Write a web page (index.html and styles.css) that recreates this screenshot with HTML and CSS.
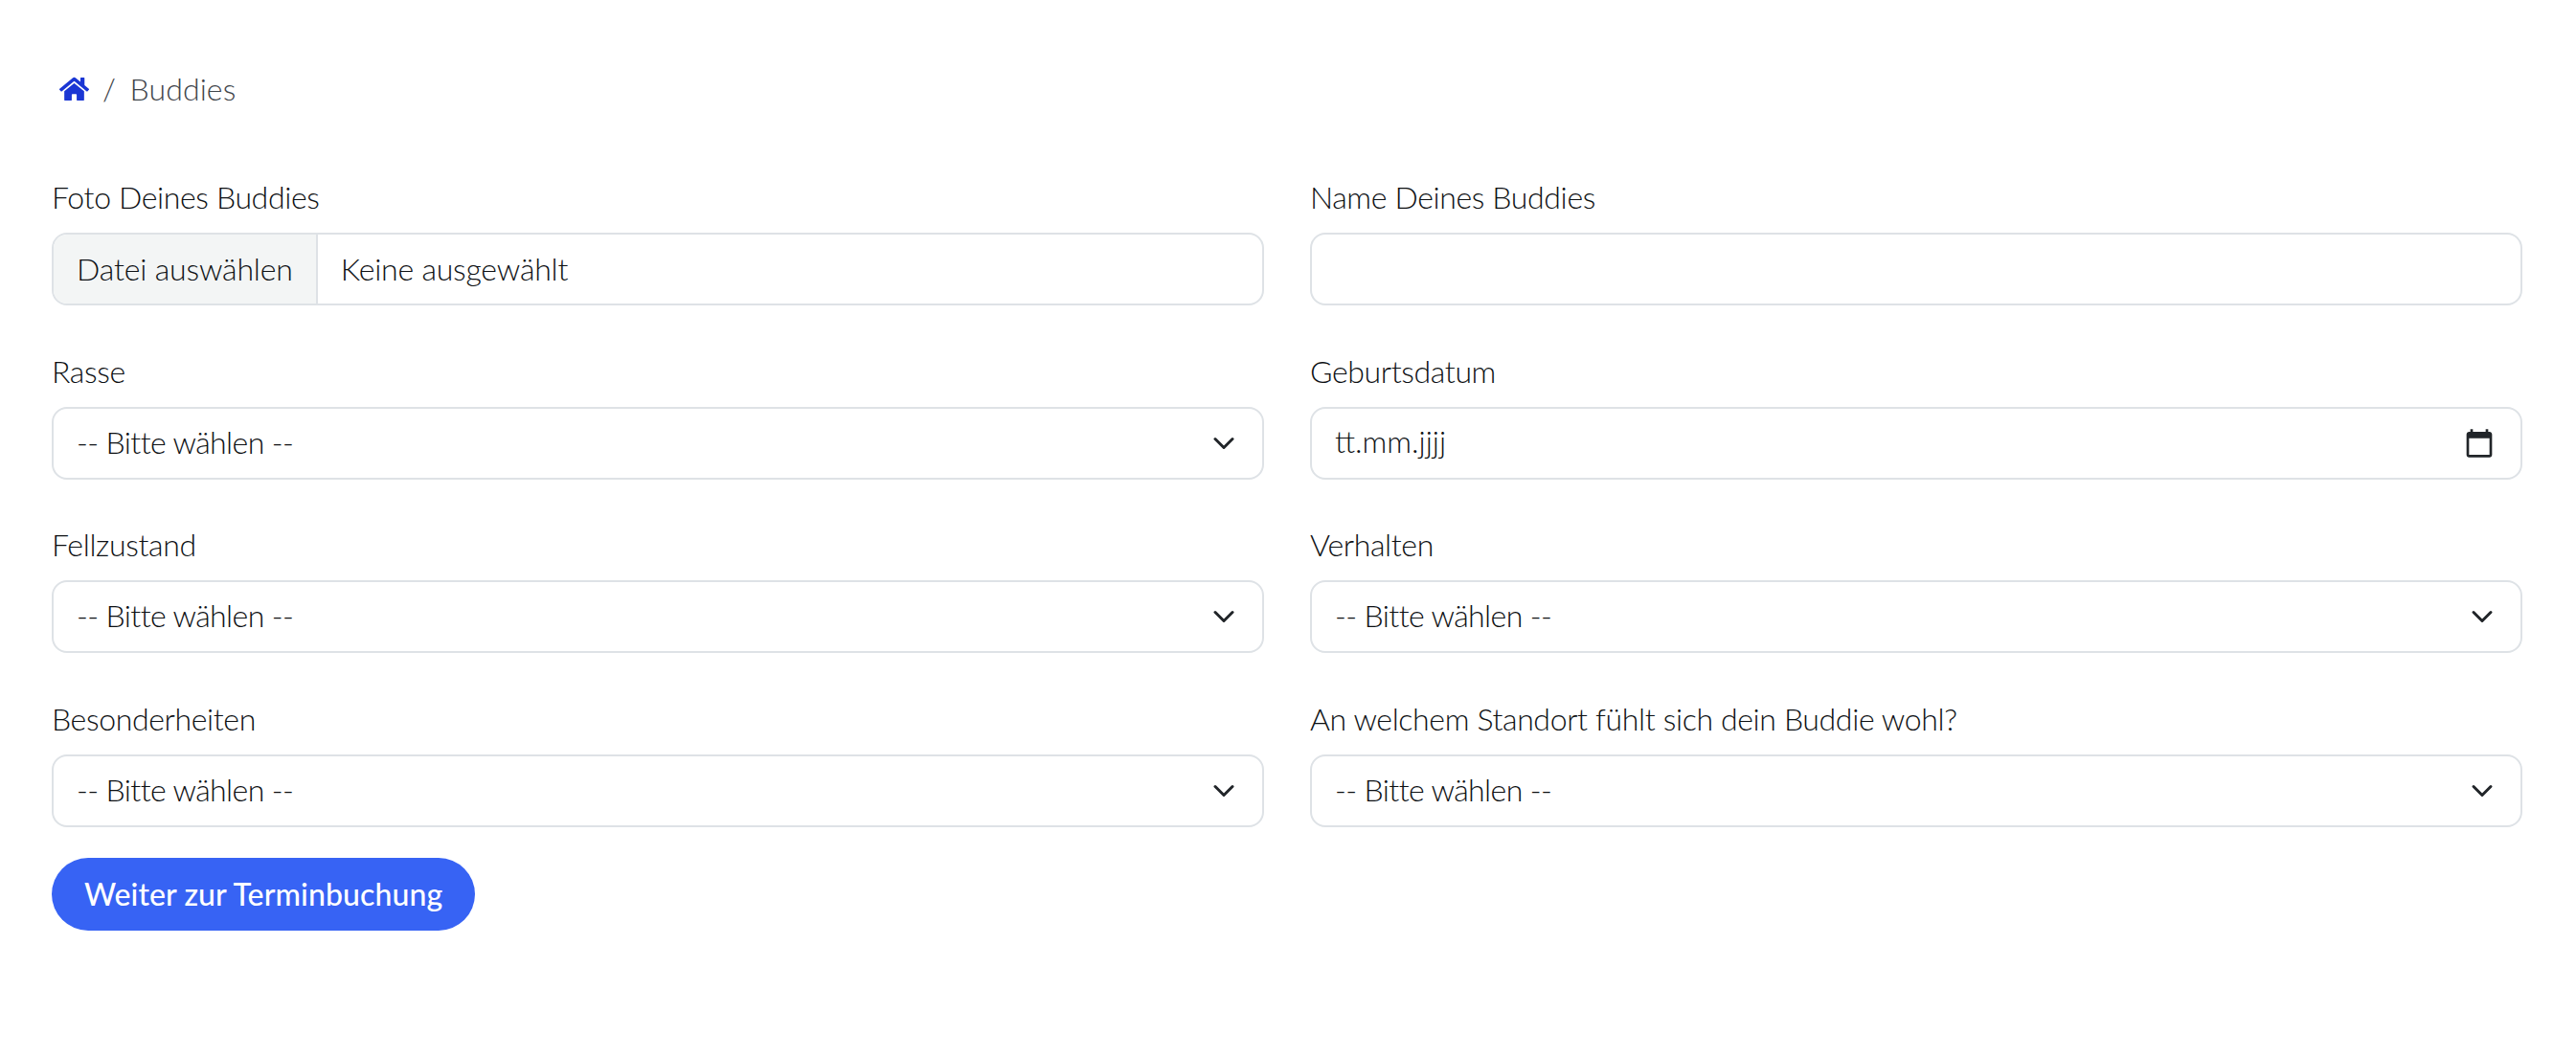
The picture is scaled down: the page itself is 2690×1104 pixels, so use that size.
FILE: index.html
```html
<!DOCTYPE html>
<html lang="de">
<head>
<meta charset="utf-8">
<title>Buddies</title>
<link rel="stylesheet" href="styles.css">
</head>
<body>
<main class="page">
  <nav class="crumbs">
    <a class="crumb-home" href="#" aria-label="Start">
      <svg class="home-icon" viewBox="0 0 576 512"><path fill="currentColor" d="M280.37 148.26L96 300.11V464a16 16 0 0 0 16 16l112.06-.29a16 16 0 0 0 15.92-16V368a16 16 0 0 1 16-16h64a16 16 0 0 1 16 16v95.64a16 16 0 0 0 16 16.05L464 480a16 16 0 0 0 16-16V300L295.67 148.26a12.19 12.19 0 0 0-15.3 0zM571.6 251.47L488 182.56V44.05a12 12 0 0 0-12-12h-56a12 12 0 0 0-12 12v72.61L318.47 43a48 48 0 0 0-61 0L4.34 251.47a12 12 0 0 0-1.6 16.9l25.5 31A12 12 0 0 0 45.15 301l235.22-193.74a12.19 12.19 0 0 1 15.3 0L530.9 301a12 12 0 0 0 16.9-1.6l25.5-31a12 12 0 0 0-1.7-16.93z"/></svg>
    </a>
    <span class="crumb-sep">/</span>
    <span class="crumb-current">Buddies</span>
  </nav>
  <form class="form">
    <div class="grid">
      <div class="field">
        <div class="label">Foto Deines Buddies</div>
        <div class="control file">
          <span class="file-btn">Datei auswählen</span>
          <span class="file-name">Keine ausgewählt</span>
        </div>
      </div>
      <div class="field">
        <label class="label" for="name">Name Deines Buddies</label>
        <input class="control input" id="name" type="text">
      </div>
      <div class="field">
        <label class="label" for="rasse">Rasse</label>
        <select class="control select" id="rasse"><option>-- Bitte wählen --</option></select>
      </div>
      <div class="field">
        <div class="label">Geburtsdatum</div>
        <div class="control date">
          <span class="date-text">tt.mm.jjjj</span>
          <svg class="cal-icon" viewBox="0 0 24 24"><path fill="currentColor" d="M20 3h-1V1h-2v2H7V1H5v2H4c-1.1 0-2 .9-2 2v16c0 1.1.9 2 2 2h16c1.1 0 2-.9 2-2V5c0-1.1-.9-2-2-2zm0 18H4V8h16v13z"/></svg>
        </div>
      </div>
      <div class="field">
        <label class="label" for="fell">Fellzustand</label>
        <select class="control select" id="fell"><option>-- Bitte wählen --</option></select>
      </div>
      <div class="field">
        <label class="label" for="verhalten">Verhalten</label>
        <select class="control select" id="verhalten"><option>-- Bitte wählen --</option></select>
      </div>
      <div class="field">
        <label class="label" for="besonder">Besonderheiten</label>
        <select class="control select" id="besonder"><option>-- Bitte wählen --</option></select>
      </div>
      <div class="field">
        <label class="label" for="standort">An welchem Standort fühlt sich dein Buddie wohl?</label>
        <select class="control select" id="standort"><option>-- Bitte wählen --</option></select>
      </div>
    </div>
    <button class="submit" type="button">Weiter zur Terminbuchung</button>
  </form>
</main>
</body>
</html>
```
FILE: styles.css
```css
* { box-sizing: border-box; }
html, body { margin: 0; background: #fff; }
body {
  font-family: Lato, "Liberation Sans", sans-serif;
  font-weight: 300;
  font-size: 32px;
  line-height: 48px;
  letter-spacing: -0.36px;
  color: #0e1114;
}
.page { padding: 69px 56px 0 54px; }
.crumbs {
  display: flex;
  align-items: center;
  height: 48px;
  padding-left: 8px;
  color: #3f454b;
}
.crumb-home { display: flex; color: #1a36d4; }
.home-icon { width: 31px; height: 28px; }
.crumb-sep { margin-left: 14px; }
.crumb-current { margin-left: 15px; letter-spacing: 0.1px; }
.form { margin-top: 65px; }
.grid {
  display: grid;
  grid-template-columns: 1fr 1fr;
  column-gap: 48px;
  row-gap: 44.6px;
  margin-bottom: 32px;
}
.field { display: flex; flex-direction: column; min-width: 0; }
.label { display: block; margin-bottom: 13px; }
.control {
  display: block;
  width: 100%;
  height: 76px;
  border: 2px solid #dee2e6;
  border-radius: 16px;
  background-color: #fff;
  font: inherit;
  letter-spacing: inherit;
  color: inherit;
}
.input { padding: 0 24px; }
.file { display: flex; overflow: hidden; }
.file-btn {
  display: flex;
  align-items: center;
  padding: 0 24px;
  background: #f3f5f5;
  border-right: 2px solid #dee2e6;
  letter-spacing: -0.15px;
}
.file-name {
  display: flex;
  align-items: center;
  padding-left: 24px;
  letter-spacing: -0.2px;
}
.date {
  display: flex;
  align-items: center;
  justify-content: space-between;
  padding: 0 27px 0 24px;
}
.date-text { margin-bottom: 3px; letter-spacing: 0; }
.cal-icon { width: 32px; height: 32px; color: #212529; }
.select {
  appearance: none;
  padding: 0 72px 2px 24px;
  letter-spacing: -0.6px;
  background-image: url("data:image/svg+xml,%3csvg xmlns='http://www.w3.org/2000/svg' viewBox='0 0 16 16'%3e%3cpath fill='none' stroke='%23212529' stroke-linecap='round' stroke-linejoin='round' stroke-width='2' d='m2 5 6 6 6-6'/%3e%3c/svg%3e");
  background-repeat: no-repeat;
  background-position: right 24px center;
  background-size: 32px 24px;
}
.submit {
  display: block;
  height: 76px;
  padding: 0 34px;
  border: 0;
  border-radius: 38px;
  background: #3763f4;
  color: #fff;
  font: inherit;
  font-weight: 500;
  letter-spacing: 0.1px;
}
```
